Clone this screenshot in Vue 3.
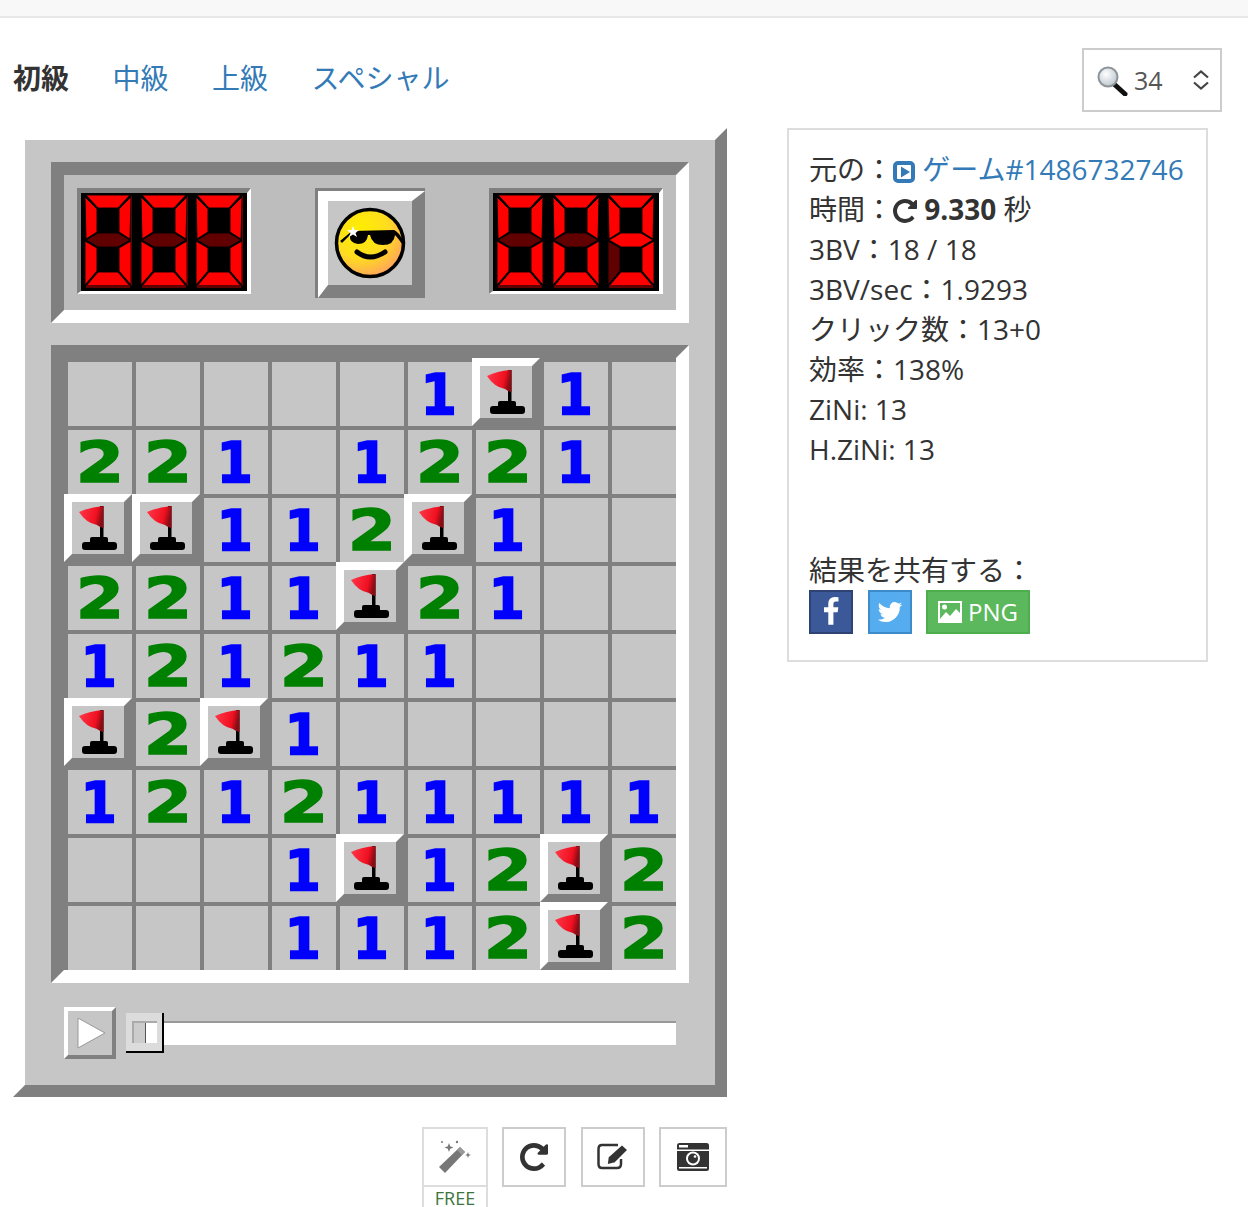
<template>
  <div class="page">
    <div class="topbar"></div>
    <div class="nav">
      <span class="tab current">初級</span>
      <a class="tab">中級</a>
      <a class="tab">上級</a>
      <a class="tab">スペシャル</a>
      <div class="zoom-select">
        <svg class="lens" width="32" height="30" viewBox="0 0 32 30">
          <defs>
            <radialGradient id="glass" cx="0.4" cy="0.35" r="0.7">
              <stop offset="0" stop-color="#ffffff" />
              <stop offset="1" stop-color="#b9c4cc" />
            </radialGradient>
          </defs>
          <path d="M18 18l11 10" stroke="#111" stroke-width="5" stroke-linecap="round" />
          <circle cx="12" cy="11" r="9.500" fill="url(#glass)" stroke="#8c949a" stroke-width="2" />
        </svg>
        <span class="zoom-value">34</span>
        <svg class="updown" width="16" height="20" viewBox="0 0 16 20">
          <path d="M1 7.500L8 1.500l7 6M1 12.500l7 6 7-6" fill="none" stroke="#444" stroke-width="2.200" />
        </svg>
      </div>
    </div>

    <div class="content">
      <div class="left">
        <div class="game">
          <div class="header">
            <div class="header-inner">
              <div class="counter">
                <svg v-for="(d, i) in leftDigits" :key="i" class="digit" width="48" height="93" viewBox="0 0 48 93">
                  <polygon v-for="(pts, s) in segments" :key="s" :points="pts" :fill="d.includes(s) ? '#ff0000' : '#600000'" stroke="#000" stroke-width="0.900" />
                  <rect x="2" y="90" width="44" height="3" fill="#600000" />
                  <rect x="47" y="1" width="1" height="90" fill="#600000" />
                </svg>
              </div>
              <div class="face-wrap">
                <div class="face-btn">
                  <svg width="76" height="76" viewBox="0 0 76 76">
                    <defs>
                      <radialGradient id="skin" cx="0.35" cy="0.3" r="0.85">
                        <stop offset="0" stop-color="#ffee00" />
                        <stop offset="0.5" stop-color="#ffdc20" />
                        <stop offset="1" stop-color="#ff9070" />
                      </radialGradient>
                    </defs>
                    <circle cx="38" cy="38" r="33.500" fill="url(#skin)" stroke="#000" stroke-width="3.500" />
                    <path d="M8 36L20 26 62 25Q66 26 72 37L70 39Q66 33 63 30 62 40 51 40 40 40 38 30L36 30Q35 39 26 39 17 38 18 30L10 38Z" fill="#000" />
                    <path d="M25 47Q38 57 53 47" fill="none" stroke="#000" stroke-width="5" stroke-linecap="round" />
                    <polygon points="21,21 22.500,25 27,25 23.500,28 25,32 21,29.500 17,32 18.500,28 15,25 19.500,25" fill="#fff" />
                  </svg>
                </div>
              </div>
              <div class="counter">
                <svg v-for="(d, i) in rightDigits" :key="i" class="digit" width="48" height="93" viewBox="0 0 48 93">
                  <polygon v-for="(pts, s) in segments" :key="s" :points="pts" :fill="d.includes(s) ? '#ff0000' : '#600000'" stroke="#000" stroke-width="0.900" />
                  <rect x="2" y="90" width="44" height="3" fill="#600000" />
                </svg>
              </div>
            </div>
          </div>

          <div class="board">
            <div class="grid">
              <template v-for="(row, r) in board" :key="r">
                <div v-for="(c, k) in row" :key="k" class="cell" :class="{ tile: c === 'F' }">
                  <svg v-if="c === 'F'" width="52" height="52" viewBox="0 0 52 52">
                    <defs>
                      <linearGradient :id="`flag-${r}-${k}`" x1="0" y1="0" x2="1" y2="0.2">
                        <stop offset="0" stop-color="#ff3a4c" />
                        <stop offset="0.75" stop-color="#f01020" />
                        <stop offset="1" stop-color="#8a0c14" />
                      </linearGradient>
                    </defs>
                    <rect x="28" y="4" width="3.500" height="32" fill="#000" />
                    <path d="M7 10Q18 5 31.500 4L31.500 26Q29 26 25 23Q14 21 7 10Z" :fill="`url(#flag-${r}-${k})`" />
                    <rect x="18" y="35" width="18" height="7" rx="2" fill="#000" />
                    <rect x="10" y="40" width="35" height="8" rx="3" fill="#000" />
                  </svg>
                  <span v-else-if="c" class="num" :class="'n' + c">{{ c }}</span>
                </div>
              </template>
            </div>
          </div>

          <div class="player">
            <div class="play">
              <svg width="44" height="44" viewBox="0 0 44 44">
                <polygon points="10,7 37,22 10,37" fill="#fff" stroke="#999" stroke-width="1" />
              </svg>
            </div>
            <div class="slider">
              <div class="thumb"><div class="thumb-in"></div></div>
            </div>
          </div>
        </div>

        <div class="tools">
          <div class="tool-free">
            <div class="tool wand">
              <svg width="34" height="34" viewBox="0 0 34 34">
                <path d="M1 27L22 7l5 5L7 33Z" fill="#777" />
                <path d="M19 10l3-3 5 5-3 3Z" fill="#999" />
                <path d="M11 3l1.200 3.300L15.500 7.500l-3.300 1.200L11 12 9.800 8.700 6.500 7.500l3.300-1.200Z" fill="#777" />
                <circle cx="4" cy="2" r="1" fill="#777" /><circle cx="19" cy="2" r="1.200" fill="#777" />
                <path d="M30 12l.8 2.200 2.200.8-2.200.8-.8 2.200-.8-2.200-2.200-.8 2.200-.8Z" fill="#777" />
              </svg>
            </div>
            <div class="free">FREE</div>
          </div>
          <div class="tool">
            <svg width="28" height="28" viewBox="128 128 1536 1536"><path :d="repeatPath" fill="#333" /></svg>
          </div>
          <div class="tool">
            <svg width="34" height="30" viewBox="0 0 34 30">
              <path d="M22 3H6Q2.500 3 2.500 7V22Q2.500 26 6 26H21Q25 26 25 22V17" fill="none" stroke="#333" stroke-width="2.500" />
              <path d="M12 15L26 2.500 32 8 19 21l-8 2Z" fill="#333" stroke="#fff" stroke-width="1.500" />
            </svg>
          </div>
          <div class="tool wide">
            <svg width="34" height="30" viewBox="0 0 34 30">
              <rect x="1" y="1" width="32" height="28" rx="2.500" fill="#333" />
              <rect x="3" y="3" width="9" height="2.500" fill="#fff" />
              <rect x="1" y="7.500" width="32" height="1.500" fill="#fff" />
              <rect x="3" y="25" width="28" height="1.500" fill="#fff" />
              <circle cx="17" cy="16.500" r="7" fill="#fff" />
              <circle cx="17" cy="16.500" r="5" fill="#333" />
              <circle cx="19" cy="14.500" r="1.300" fill="#fff" />
            </svg>
          </div>
        </div>
      </div>

      <div class="info">
        <div class="line">元の：<svg class="ico" width="22" height="22" viewBox="0 0 22 22"><rect x="2" y="2" width="18" height="18" rx="3" fill="none" stroke="#337ab7" stroke-width="4" /><polygon points="8,5.500 17,11 8,16.500" fill="#337ab7" /></svg> <a class="link">ゲーム#1486732746</a></div>
        <div class="line">時間：<svg class="ico redo" width="24" height="24" viewBox="128 128 1536 1536"><path :d="repeatPath" fill="#333" /></svg> <b>9.330</b> 秒</div>
        <div class="line">3BV：18 / 18</div>
        <div class="line">3BV/sec：1.9293</div>
        <div class="line">クリック数：13+0</div>
        <div class="line">効率：138%</div>
        <div class="line">ZiNi: 13</div>
        <div class="line">H.ZiNi: 13</div>
        <div class="share-title">結果を共有する：</div>
        <div class="share">
          <div class="btn fb">
            <svg width="30" height="30" viewBox="0 0 1792 1792"><path d="M1343 12v264h-157q-86 0-116 36t-30 108v189h293l-39 296h-254v759h-306v-759h-255v-296h255v-218q0-186 104-288.500t277-102.500q147 0 228 12z" fill="#fff" /></svg>
          </div>
          <div class="btn tw">
            <svg width="28" height="28" viewBox="0 0 1792 1792"><path d="M1684 408q-67 98-162 167 1 14 1 42 0 130-38 259.500t-115.500 248.500-184.500 210.500-258 146-323 54.500q-271 0-496-145 35 4 78 4 225 0 401-138-105-2-188-64.500t-114-159.500q33 5 61 5 43 0 85-11-112-23-185.500-111.500t-73.500-205.500v-4q68 38 146 41-66-44-105-115t-39-154q0-88 44-163 121 149 294.500 238.500t371.500 99.500q-8-38-8-74 0-134 94.500-228.500t228.500-94.500q140 0 236 102 109-21 205-78-37 115-142 178 91-10 188-49z" fill="#fff" /></svg>
          </div>
          <div class="btn png">
            <svg width="24" height="22" viewBox="0 0 24 22">
              <path d="M0 0H24V22H0ZM2 18L8 11l4 4 6-7 4 4V2H2Z" fill="#fff" fill-rule="evenodd" />
              <circle cx="6.500" cy="6" r="2.500" fill="#fff" />
            </svg>
            <span>PNG</span>
          </div>
        </div>
      </div>
    </div>
  </div>
</template>

<script setup>
const repeatPath =
  "M1664 256v448q0 26-19 45t-45 19h-448q-42 0-59-40-17-39 14-69l138-138q-148-137-349-137-104 0-198.500 40.500t-163.500 109.500-109.500 163.500-40.500 198.500 40.500 198.500 109.500 163.500 163.500 109.500 198.500 40.500q119 0 225-52t179-147q7-10 23-12 15 0 25 9l137 138q9 8 9.500 20.500t-7.500 22.500q-109 132-264 204.500t-327 72.500q-156 0-298-61t-245-164-164-245-61-298 61-298 164-245 245-164 298-61q147 0 284.500 55.500t244.500 156.500l130-129q29-31 70-14 39 17 39 59z";

// seven segment display: top, upper left, upper right, middle, lower left, lower right, bottom
const segments = [
  "2,0 46,0 34,13 14,13",
  "1,2 13,14 13,37 2,44",
  "47,2 35,14 35,37 46,44",
  "2,45 14,38 34,38 46,45 34,52 14,52",
  "1,46 13,53 13,76 1,90",
  "47,46 35,53 35,76 47,90",
  "14,77 34,77 46,91 2,91",
];
const zero = [0, 1, 2, 4, 5, 6];
const nine = [0, 1, 2, 3, 5, 6];
const leftDigits = [zero, zero, zero];
const rightDigits = [zero, zero, nine];

const F = "F";
const board = [
  [0, 0, 0, 0, 0, 1, F, 1, 0],
  [2, 2, 1, 0, 1, 2, 2, 1, 0],
  [F, F, 1, 1, 2, F, 1, 0, 0],
  [2, 2, 1, 1, F, 2, 1, 0, 0],
  [1, 2, 1, 2, 1, 1, 0, 0, 0],
  [F, 2, F, 1, 0, 0, 0, 0, 0],
  [1, 2, 1, 2, 1, 1, 1, 1, 1],
  [0, 0, 0, 1, F, 1, 2, F, 2],
  [0, 0, 0, 1, 1, 1, 2, F, 2],
];
</script>

<style>
body {
  margin: 0;
  background: #fff;
}
</style>

<style scoped>
.page {
  width: 1248px;
  height: 1207px;
  overflow: hidden;
  font-family: "Open Sans", "Noto Sans CJK JP", sans-serif;
  font-size: 28px;
  line-height: 40px;
  color: #333;
}

.topbar {
  height: 16px;
  background: #f8f8f8;
  border-bottom: 2px solid #e7e7e7;
}

.nav {
  display: flex;
  align-items: center;
  gap: 43.500px;
  height: 64px;
  padding: 30px 26px 16px 13px;
}

.tab {
  color: #337ab7;
  margin-bottom: 4px;
}

.tab.current {
  color: #333;
  font-weight: 700;
}

.zoom-select {
  margin-left: auto;
  width: 140px;
  height: 64px;
  box-sizing: border-box;
  border: 2px solid #ccc;
  display: flex;
  align-items: center;
  padding-left: 12px;
  color: #555;
  font-size: 25px;
}

.lens {
  margin-top: 2px;
}

.zoom-value {
  margin-left: 6px;
}

.updown {
  margin-left: auto;
  margin-right: 11px;
}

.content {
  display: flex;
  align-items: flex-start;
  padding-left: 13px;
}

.left {
  width: 714px;
}

.game {
  box-sizing: border-box;
  width: 714px;
  height: 969px;
  border: 12px solid;
  border-color: #fff #808080 #808080 #fff;
  background: #c6c6c6;
  padding: 22px 26px 0;
}

.header {
  height: 135px;
  border: 13px solid;
  border-color: #808080 #fff #fff #808080;
}

.header-inner {
  height: 135px;
  box-sizing: border-box;
  background: #bdbdbd;
  padding: 13px 13px 12px;
  display: flex;
  justify-content: space-between;
  align-items: flex-start;
}

.counter {
  box-sizing: border-box;
  width: 174px;
  height: 106px;
  display: flex;
  gap: 7.500px;
  padding: 2px 3px;
  background: #000;
  border: 4px solid;
  border-width: 5px 4px 3px 4px;
  border-color: #808080 #fff #fff #808080;
}

.digit {
  display: block;
}

.face-wrap {
  width: 110px;
  height: 110px;
  box-sizing: border-box;
  background: #808080;
  padding: 3px 0 0 3px;
}

.face-btn {
  box-sizing: border-box;
  width: 107px;
  height: 107px;
  border: 10px solid;
  border-width: 10px 13px 13px 10px;
  border-color: #fff #808080 #808080 #fff;
  background: #c6c6c6;
  display: flex;
  align-items: center;
  justify-content: center;
}

.board {
  margin-top: 22px;
  width: 612px;
  height: 612px;
  border: 13px solid;
  border-color: #808080 #fff #fff #808080;
}

.grid {
  display: grid;
  grid-template-columns: repeat(9, 68px);
  grid-auto-rows: 68px;
}

.cell {
  box-sizing: border-box;
  border-top: 4px solid #808080;
  border-left: 4px solid #808080;
  background: #c6c6c6;
  display: flex;
  align-items: center;
  justify-content: center;
}

.cell.tile {
  border: 8px solid;
  border-color: #fff #808080 #808080 #fff;
}

.cell.tile svg {
  display: block;
}

.num {
  font-family: "DejaVu Sans", sans-serif;
  font-weight: 700;
  font-size: 57px;
  line-height: 60px;
  -webkit-text-stroke: 1.500px currentColor;
}

.n1 {
  color: #0000ff;
  transform: translate(-1px, 1px) scaleX(0.920);
}

.n2 {
  color: #008000;
  transform: translateY(1px) scaleX(1.220);
}

.player {
  display: flex;
  align-items: center;
  margin-top: 24px;
  padding-left: 13px;
  height: 52px;
}

.play {
  box-sizing: border-box;
  width: 52px;
  height: 52px;
  border: 4px solid;
  border-color: #fff #808080 #808080 #fff;
  display: flex;
  align-items: center;
  justify-content: center;
}

.slider {
  position: relative;
  margin-left: 10px;
  width: 550px;
  height: 24px;
  box-sizing: border-box;
  background: #fff;
  border-top: 2px solid #999;
}

.thumb {
  position: absolute;
  left: 0;
  top: -10px;
  box-sizing: border-box;
  width: 38px;
  height: 40px;
  background: #dcdcdc;
  border-right: 2px solid #000;
  border-bottom: 2px solid #000;
  padding: 8px 5px 8px 6px;
}

.thumb-in {
  height: 100%;
  box-sizing: border-box;
  border-top: 2px solid #aaa;
  border-left: 2px solid #aaa;
  background: linear-gradient(to right, #ccc 0, #ccc 11px, #555 11px, #555 12px, #fff 12px);
}

.tools {
  display: flex;
  justify-content: flex-end;
  gap: 14.340px;
  margin-top: 30px;
}

.tool {
  box-sizing: border-box;
  width: 64px;
  height: 60px;
  border: 2px solid #ccc;
  display: flex;
  align-items: center;
  justify-content: center;
}

.tool.wide {
  width: 68px;
}

.tool-free {
  width: 66px;
}

.tool.wand {
  width: 66px;
  border-color: #ddd;
}

.free {
  box-sizing: border-box;
  margin-top: -2px;
  height: 40px;
  border: 2px solid #ddd;
  text-align: center;
  font-size: 18px;
  line-height: 22px;
  color: #3c763d;
}

.info {
  box-sizing: border-box;
  margin-left: 60px;
  width: 421px;
  height: 534px;
  border: 2px solid #ddd;
  padding: 19px 20px 20px;
}

.line {
  white-space: nowrap;
}

.ico {
  vertical-align: -3px;
}

.link {
  color: #337ab7;
}

.share-title {
  margin-top: 81px;
}

.share {
  display: flex;
  gap: 15px;
}

.btn {
  box-sizing: border-box;
  height: 44px;
  width: 44px;
  border: 2px solid;
  display: flex;
  align-items: center;
  justify-content: center;
  color: #fff;
}

.btn.fb {
  background: #3b5998;
  border-color: #2d4373;
}

.btn.tw {
  background: #55acee;
  border-color: #3d8bc9;
}

.btn.png {
  width: 104px;
  margin-left: -1px;
  gap: 6px;
  background: #5cb85c;
  border-color: #4cae4c;
  font-size: 24px;
  line-height: 40px;
}
</style>
